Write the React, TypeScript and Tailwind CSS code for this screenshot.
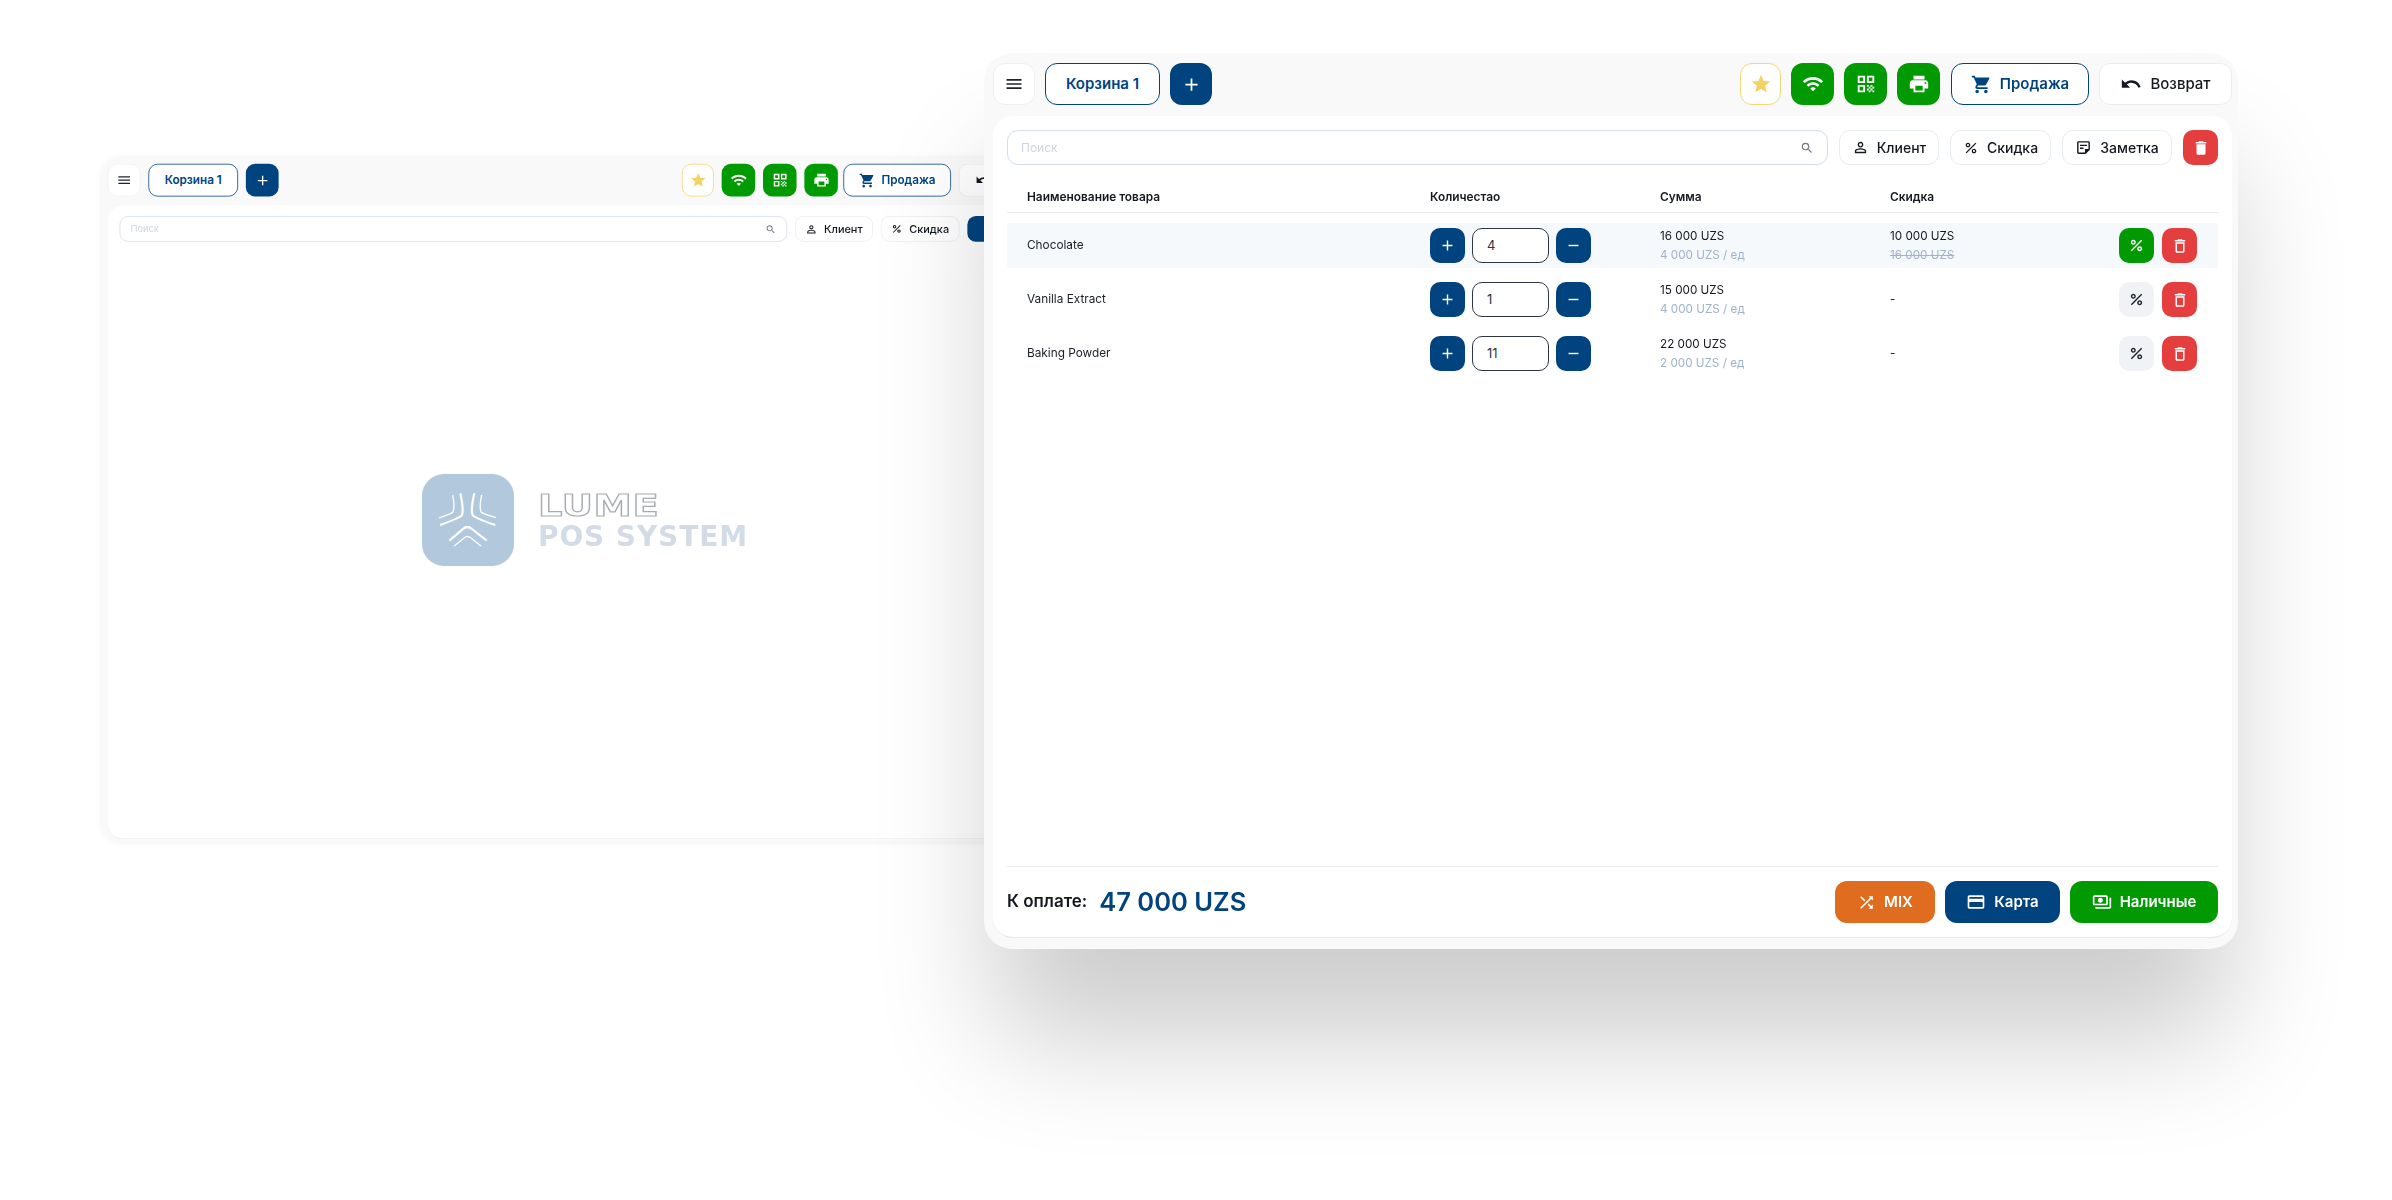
import type { ReactNode } from "react";
import {
  MdAdd,
  MdCreditCard,
  MdDelete,
  MdMenu,
  MdOutlineDelete,
  MdOutlinePayments,
  MdOutlineStickyNote2,
  MdPercent,
  MdPersonOutline,
  MdPrint,
  MdQrCode,
  MdRemove,
  MdSearch,
  MdShoppingCart,
  MdShuffle,
  MdStar,
  MdUndo,
  MdWifi,
} from "react-icons/md";

const products = [
  { name: "Chocolate", qty: "4", sum: "16 000 UZS", unit: "4 000 UZS / ед", discount: "10 000 UZS", old: "16 000 UZS", active: true },
  { name: "Vanilla Extract", qty: "1", sum: "15 000 UZS", unit: "4 000 UZS / ед", discount: "-", active: false },
  { name: "Baking Powder", qty: "11", sum: "22 000 UZS", unit: "2 000 UZS / ед", discount: "-", active: false },
];

function IconButton({ className, children }: { className: string; children: ReactNode }) {
  return (
    <button className={`flex shrink-0 items-center justify-center ${className}`}>
      {children}
    </button>
  );
}

function OutlineButton({ icon, label, className }: { icon: ReactNode; label: string; className: string }) {
  return (
    <button className={`flex shrink-0 items-center justify-center gap-2 rounded-[11px] border border-[#e8edf2] bg-white font-medium text-[#14181f] ${className}`}>
      {icon}
      {label}
    </button>
  );
}

function TopBar({ saleGap }: { saleGap: string }) {
  return (
    <div className="flex h-[42px] shrink-0 items-center">
      <IconButton className="h-[42px] w-[42px] rounded-[12px] border border-[#edf0f3] bg-white text-[#1f2530]">
        <MdMenu size={20} />
      </IconButton>
      <button className="ml-[10px] h-[42px] w-[115px] rounded-[12px] border border-[#00437f] bg-white text-[15px] font-semibold text-[#00437f]">
        Корзина 1
      </button>
      <IconButton className="ml-[10px] h-[42px] w-[42px] rounded-[12px] bg-[#00437f] text-white">
        <MdAdd size={21} />
      </IconButton>
      <div className="flex-1" />
      <div className="flex items-center gap-[10px]">
        <IconButton className="h-[42px] w-[41px] rounded-[12px] border border-[#f2d778] bg-white text-[#f3d163]">
          <MdStar size={22} />
        </IconButton>
        <IconButton className="h-[42px] w-[43px] rounded-[12px] bg-[#029a02] text-white">
          <MdWifi size={22} />
        </IconButton>
        <IconButton className="h-[42px] w-[43px] rounded-[12px] bg-[#029a02] text-white">
          <MdQrCode size={22} />
        </IconButton>
        <IconButton className="h-[42px] w-[43px] rounded-[12px] bg-[#029a02] text-white">
          <MdPrint size={22} />
        </IconButton>
      </div>
      <button className={`${saleGap} flex h-[42px] w-[138px] items-center justify-center gap-2 rounded-[12px] border border-[#00437f] bg-white text-[15px] font-semibold text-[#00437f]`}>
        <MdShoppingCart size={21} />
        Продажа
      </button>
      <OutlineButton
        icon={<MdUndo size={22} />}
        label="Возврат"
        className="ml-[10px] h-[42px] w-[133px] text-[15px]"
      />
    </div>
  );
}

function SearchField({ height }: { height: string }) {
  return (
    <div className={`flex min-w-0 flex-1 items-center justify-between rounded-[11px] border border-[#d5dee8] bg-white px-[13px] ${height}`}>
      <span className="text-[12px] text-[#cdd6e0]">Поиск</span>
      <MdSearch size={14} className="text-[#6f7780]" />
    </div>
  );
}

function ProductRow({ item }: { item: (typeof products)[number] }) {
  return (
    <div className={`grid h-[45px] grid-cols-[403px_230px_230px_1fr] items-center px-5 ${item.active ? "bg-[#f6f9fc]" : ""}`}>
      <span className="text-[11.8px] text-[#1a1f27]">{item.name}</span>
      <div className="flex items-center gap-[7px]">
        <IconButton className="h-[35px] w-[35px] rounded-[10px] bg-[#00437f] text-white">
          <MdAdd size={17} />
        </IconButton>
        <div className="flex h-[35px] w-[77px] items-center rounded-[10px] border border-[#2d3542] bg-white pl-[14px] text-[13px] text-[#2d3542]">
          {item.qty}
        </div>
        <IconButton className="h-[35px] w-[35px] rounded-[10px] bg-[#00437f] text-white">
          <MdRemove size={17} />
        </IconButton>
      </div>
      <div className="flex flex-col gap-[4px] text-[11.7px] leading-[15px]">
        <span className="text-[#14181f]">{item.sum}</span>
        <span className="text-[#9fb3cb]">{item.unit}</span>
      </div>
      <div className="flex items-center justify-between pr-px">
        <div className="flex flex-col gap-[4px] text-[11.7px] leading-[15px]">
          <span className="text-[#14181f]">{item.discount}</span>
          {item.old && <span className="text-[#9fb3cb] line-through">{item.old}</span>}
        </div>
        <div className="flex gap-[8px]">
          <IconButton className={`h-[35px] w-[35px] rounded-[10px] ${item.active ? "bg-[#029a02] text-white" : "bg-[#f0f2f5] text-[#1f2530]"}`}>
            <MdPercent size={17} />
          </IconButton>
          <IconButton className="h-[35px] w-[35px] rounded-[10px] bg-[#e53e3e] text-white">
            <MdOutlineDelete size={18} />
          </IconButton>
        </div>
      </div>
    </div>
  );
}

function Logo() {
  return (
    <div className="flex items-start gap-[24px]">
      <div className="h-[92px] w-[92px] rounded-[22px] bg-[#b2c8dc]">
        <svg width="92" height="92" viewBox="0 0 92 92" fill="none" stroke="white" strokeWidth="1.3">
          <path d="M30.7 21 Q33 33 31 38 Q29 40 16.7 44" />
          <path d="M38.3 19.3 Q42 36 40 41 Q38 44 18 51" strokeWidth="2.2" />
          <path d="M52.3 19.3 Q48.5 36 50.5 41 Q52.5 44 73.3 51" strokeWidth="2.2" />
          <path d="M59.7 21 Q57 33 59 38 Q61 40 74 43.7" />
          <path d="M27.3 66.7 L41 55 Q45.3 51 50 55 L64.7 66.7" strokeWidth="2.2" />
          <path d="M32.3 72 L42 64 Q45.3 61 49 64 L59 72" />
        </svg>
      </div>
      <div className="flex flex-col pt-[15px]">
        <span className="origin-left scale-x-[1.24] font-['DejaVu_Sans'] text-[31px] font-bold leading-[33px] tracking-[0.5px] text-transparent [-webkit-text-stroke:1.2px_#a9adb2]">
          LUME
        </span>
        <span className="-mt-px font-['DejaVu_Sans'] text-[28px] font-bold leading-[32px] tracking-[0.9px] text-[#d3dce6]">
          POS SYSTEM
        </span>
      </div>
    </div>
  );
}

function BackWindow() {
  return (
    <div className="absolute left-[100px] top-[156px] h-[882px] w-[1244px] origin-top-left scale-[0.78] rounded-[28px] bg-[#f9f9f9] p-[10px] pb-[6px] shadow-[0_0_10px_rgba(0,0,0,0.03)]">
      <div className="flex h-full flex-col gap-[11px]">
        <TopBar saleGap="ml-[7px]" />
        <div className="flex flex-1 flex-col rounded-[20px] border-b border-[#e8e8e8] bg-white p-[14px] pl-[15px]">
          <div className="flex items-center gap-[10px]">
            <SearchField height="h-[33px]" />
            <OutlineButton icon={<MdPersonOutline size={16} />} label="Клиент" className="h-[33px] w-[100px] text-[14px]" />
            <OutlineButton icon={<MdPercent size={15} />} label="Скидка" className="h-[33px] w-[101px] text-[14px]" />
            <IconButton className="h-[33px] w-[108px] rounded-[11px] bg-[#00437f] text-white">$</IconButton>
          </div>
        </div>
      </div>
    </div>
  );
}

function FrontWindow() {
  return (
    <div className="absolute left-[984px] top-[53px] flex h-[896px] w-[1254px] flex-col gap-[11px] rounded-[28px] bg-[#f9f9f9] p-[10px] pl-[9px] pr-[6px] pb-[11px] shadow-[0_100px_120px_-10px_rgba(0,0,0,0.2)]">
      <TopBar saleGap="ml-[11px]" />
      <div className="flex min-h-0 flex-1 flex-col rounded-[20px] border-b border-[#e8e8e8] bg-white p-[14px]">
        <div className="flex items-center gap-[11px]">
          <SearchField height="h-[35px]" />
          <OutlineButton icon={<MdPersonOutline size={17} />} label="Клиент" className="h-[35px] w-[100px] text-[14px]" />
          <OutlineButton icon={<MdPercent size={16} />} label="Скидка" className="h-[35px] w-[101px] text-[14px]" />
          <OutlineButton icon={<MdOutlineStickyNote2 size={17} />} label="Заметка" className="h-[35px] w-[110px] text-[14px]" />
          <IconButton className="h-[35px] w-[35px] rounded-[10px] bg-[#e53e3e] text-white">
            <MdDelete size={18} />
          </IconButton>
        </div>

        <div className="mt-[23px] grid h-[25px] grid-cols-[403px_230px_230px_1fr] border-b border-[#e6ebf1] px-5 text-[11.9px] font-semibold text-[#14181f]">
          <span>Наименование товара</span>
          <span>Количестао</span>
          <span>Сумма</span>
          <span>Скидка</span>
        </div>

        <div className="mt-[10px] flex flex-1 flex-col gap-[9px]">
          {products.map((item) => (
            <ProductRow key={item.name} item={item} />
          ))}
        </div>

        <div className="flex items-center justify-between border-t border-[#ececec] pt-[14px]">
          <div className="flex items-center gap-[12px]">
            <span className="text-[17px] font-semibold text-[#14181f]">К оплате:</span>
            <span className="text-[25.5px] font-semibold text-[#00437f]">47 000 UZS</span>
          </div>
          <div className="flex gap-[10px] text-[15px] font-semibold text-white">
            <button className="flex h-[42px] w-[100px] items-center justify-center gap-2 rounded-[12px] bg-[#e06c1f]">
              <MdShuffle size={19} />
              MIX
            </button>
            <button className="flex h-[42px] w-[115px] items-center justify-center gap-2 rounded-[12px] bg-[#00437f]">
              <MdCreditCard size={20} />
              Карта
            </button>
            <button className="flex h-[42px] w-[148px] items-center justify-center gap-2 rounded-[12px] bg-[#029a02]">
              <MdOutlinePayments size={20} />
              Наличные
            </button>
          </div>
        </div>
      </div>
    </div>
  );
}

export default function App() {
  return (
    <div className="relative h-[1200px] w-[2392px] overflow-hidden bg-white font-['Inter',sans-serif]">
      <BackWindow />
      <div className="absolute left-[422px] top-[474px]">
        <Logo />
      </div>
      <FrontWindow />
    </div>
  );
}
